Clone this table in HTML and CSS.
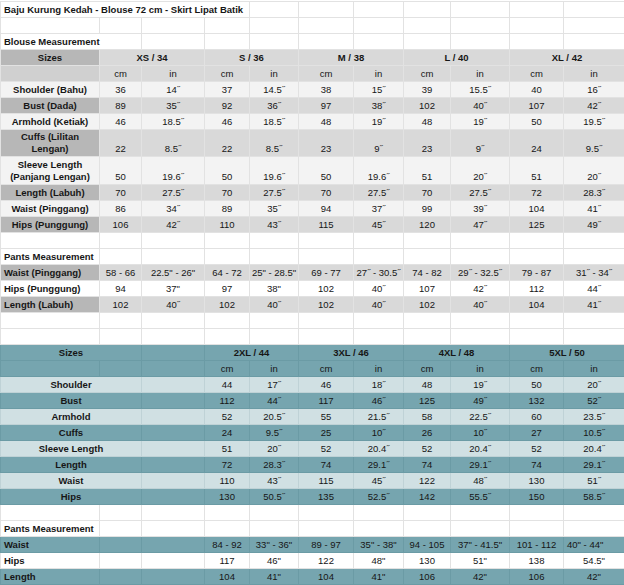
FILE: index.html
```html
<!DOCTYPE html>
<html lang="ms">
<head>
<meta charset="utf-8">
<title>Baju Kurung Kedah - Size Chart</title>
<link rel="stylesheet" href="styles.css">
</head>
<body>
<table class="sheet">
  <colgroup>
    <col class="c-a"><col class="c-b"><col class="c-c"><col class="c-d"><col class="c-e"><col class="c-f"><col class="c-g"><col class="c-h"><col class="c-i"><col class="c-j"><col class="c-k">
  </colgroup>
  <tbody>
    <tr><td class="left b" colspan="4">Baju Kurung Kedah - Blouse 72 cm - Skirt Lipat Batik</td><td></td><td></td><td></td><td></td><td></td><td></td><td></td></tr>
    <tr><td></td><td></td><td></td><td></td><td></td><td></td><td></td><td></td><td></td><td></td><td></td></tr>
    <tr><td class="left b" colspan="2">Blouse Measurement</td><td></td><td></td><td></td><td></td><td></td><td></td><td></td><td></td><td></td></tr>

    <tr class="g2 b"><td class="g3">Sizes</td><td colspan="2">XS / 34</td><td colspan="2">S / 36</td><td colspan="2">M / 38</td><td colspan="2">L / 40</td><td colspan="2">XL / 42</td></tr>
    <tr class="g2"><td class="g5"></td><td>cm</td><td>in</td><td>cm</td><td>in</td><td>cm</td><td>in</td><td>cm</td><td>in</td><td>cm</td><td>in</td></tr>
    <tr class="g1"><td class="b">Shoulder (Bahu)</td><td>36</td><td>14˝</td><td>37</td><td>14.5˝</td><td>38</td><td>15˝</td><td>39</td><td>15.5˝</td><td>40</td><td>16˝</td></tr>
    <tr class="g2"><td class="g3 b">Bust (Dada)</td><td>89</td><td>35˝</td><td>92</td><td>36˝</td><td>97</td><td>38˝</td><td>102</td><td>40˝</td><td>107</td><td>42˝</td></tr>
    <tr class="g1"><td class="b">Armhold (Ketiak)</td><td>46</td><td>18.5˝</td><td>46</td><td>18.5˝</td><td>48</td><td>19˝</td><td>48</td><td>19˝</td><td>50</td><td>19.5˝</td></tr>
    <tr class="g2 tall"><td class="g3 b">Cuffs (Lilitan<br>Lengan)</td><td>22</td><td>8.5˝</td><td>22</td><td>8.5˝</td><td>23</td><td>9˝</td><td>23</td><td>9˝</td><td>24</td><td>9.5˝</td></tr>
    <tr class="g1 tall2"><td class="b">Sleeve Length<br>(Panjang Lengan)</td><td>50</td><td>19.6˝</td><td>50</td><td>19.6˝</td><td>50</td><td>19.6˝</td><td>51</td><td>20˝</td><td>51</td><td>20˝</td></tr>
    <tr class="g2"><td class="g3 b">Length (Labuh)</td><td>70</td><td>27.5˝</td><td>70</td><td>27.5˝</td><td>70</td><td>27.5˝</td><td>70</td><td>27.5˝</td><td>72</td><td>28.3˝</td></tr>
    <tr class="g1"><td class="b">Waist (Pinggang)</td><td>86</td><td>34˝</td><td>89</td><td>35˝</td><td>94</td><td>37˝</td><td>99</td><td>39˝</td><td>104</td><td>41˝</td></tr>
    <tr class="g2"><td class="g3 b">Hips (Punggung)</td><td>106</td><td>42˝</td><td>110</td><td>43˝</td><td>115</td><td>45˝</td><td>120</td><td>47˝</td><td>125</td><td>49˝</td></tr>

    <tr><td></td><td></td><td></td><td></td><td></td><td></td><td></td><td></td><td></td><td></td><td></td></tr>
    <tr><td class="left b">Pants Measurement</td><td></td><td></td><td></td><td></td><td></td><td></td><td></td><td></td><td></td><td></td></tr>
    <tr class="g2"><td class="g3 left b">Waist (Pinggang)</td><td>58 - 66</td><td>22.5" - 26"</td><td>64 - 72</td><td>25" - 28.5"</td><td>69 - 77</td><td>27˝ - 30.5˝</td><td>74 - 82</td><td>29˝ - 32.5˝</td><td>79 - 87</td><td>31˝ - 34˝</td></tr>
    <tr><td class="left b">Hips (Punggung)</td><td>94</td><td>37"</td><td>97</td><td>38"</td><td>102</td><td>40˝</td><td>107</td><td>42˝</td><td>112</td><td>44˝</td></tr>
    <tr class="g2"><td class="g3 left b">Length (Labuh)</td><td>102</td><td>40˝</td><td>102</td><td>40˝</td><td>102</td><td>40˝</td><td>102</td><td>40˝</td><td>104</td><td>41˝</td></tr>

    <tr><td></td><td></td><td></td><td></td><td></td><td></td><td></td><td></td><td></td><td></td><td></td></tr>
    <tr><td></td><td></td><td></td><td></td><td></td><td></td><td></td><td></td><td></td><td></td><td></td></tr>

    <tr class="t1 b"><td colspan="2">Sizes</td><td></td><td colspan="2">2XL / 44</td><td colspan="2">3XL / 46</td><td colspan="2">4XL / 48</td><td colspan="2">5XL / 50</td></tr>
    <tr class="t1"><td></td><td></td><td></td><td>cm</td><td>in</td><td>cm</td><td>in</td><td>cm</td><td>in</td><td>cm</td><td>in</td></tr>
    <tr class="t2"><td class="b" colspan="2">Shoulder</td><td></td><td>44</td><td>17˝</td><td>46</td><td>18˝</td><td>48</td><td>19˝</td><td>50</td><td>20˝</td></tr>
    <tr class="t1"><td class="b" colspan="2">Bust</td><td></td><td>112</td><td>44˝</td><td>117</td><td>46˝</td><td>125</td><td>49˝</td><td>132</td><td>52˝</td></tr>
    <tr class="t2"><td class="b" colspan="2">Armhold</td><td></td><td>52</td><td>20.5˝</td><td>55</td><td>21.5˝</td><td>58</td><td>22.5˝</td><td>60</td><td>23.5˝</td></tr>
    <tr class="t1"><td class="b" colspan="2">Cuffs</td><td></td><td>24</td><td>9.5˝</td><td>25</td><td>10˝</td><td>26</td><td>10˝</td><td>27</td><td>10.5˝</td></tr>
    <tr class="t2"><td class="b" colspan="2">Sleeve Length</td><td></td><td>51</td><td>20˝</td><td>52</td><td>20.4˝</td><td>52</td><td>20.4˝</td><td>52</td><td>20.4˝</td></tr>
    <tr class="t1"><td class="b" colspan="2">Length</td><td></td><td>72</td><td>28.3˝</td><td>74</td><td>29.1˝</td><td>74</td><td>29.1˝</td><td>74</td><td>29.1˝</td></tr>
    <tr class="t2"><td class="b" colspan="2">Waist</td><td></td><td>110</td><td>43˝</td><td>115</td><td>45˝</td><td>122</td><td>48˝</td><td>130</td><td>51˝</td></tr>
    <tr class="t1"><td class="b" colspan="2">Hips</td><td></td><td>130</td><td>50.5˝</td><td>135</td><td>52.5˝</td><td>142</td><td>55.5˝</td><td>150</td><td>58.5˝</td></tr>

    <tr><td></td><td></td><td></td><td></td><td></td><td></td><td></td><td></td><td></td><td></td><td></td></tr>
    <tr><td class="left b">Pants Measurement</td><td></td><td></td><td></td><td></td><td></td><td></td><td></td><td></td><td></td><td></td></tr>
    <tr class="t1"><td class="left b">Waist</td><td></td><td></td><td>84 - 92</td><td>33" - 36"</td><td>89 - 97</td><td>35" - 38"</td><td>94 - 105</td><td>37" - 41.5"</td><td>101 - 112</td><td class="left">40" - 44"</td></tr>
    <tr><td class="left b">Hips</td><td></td><td></td><td>117</td><td>46"</td><td>122</td><td>48"</td><td>130</td><td>51"</td><td>138</td><td>54.5"</td></tr>
    <tr class="t1"><td class="left b">Length</td><td></td><td></td><td>104</td><td>41"</td><td>104</td><td>41"</td><td>106</td><td>42"</td><td>106</td><td>42"</td></tr>
  </tbody>
</table>
</body>
</html>
```

FILE: styles.css
```css
html, body {
  margin: 0;
  padding: 0;
  background: #ffffff;
}

body {
  font-family: "Liberation Sans", Arial, sans-serif;
  font-size: 9.5px;
  color: #161616;
  overflow: hidden;
}

.sheet {
  border-collapse: collapse;
  table-layout: fixed;
  width: 624px;
  margin-top: 1px;
}

.c-a { width: 99px; }
.c-b { width: 42px; }
.c-c { width: 63px; }
.c-d { width: 45px; }
.c-e { width: 49px; }
.c-f { width: 55px; }
.c-g { width: 50px; }
.c-h { width: 47px; }
.c-i { width: 59px; }
.c-j { width: 54px; }
.c-k { width: 61px; }

.sheet tr {
  height: 16px;
}

.sheet tr.tall { height: 27px; }
.sheet tr.tall2 { height: 28px; }

.sheet td {
  border: 1px solid #e2e2e2;
  padding: 0 1px 1px;
  line-height: 12px;
  vertical-align: bottom;
  text-align: center;
  white-space: nowrap;
  overflow: visible;
}

.sheet td.left {
  text-align: left;
  padding-left: 3px;
}

.b { font-weight: bold; }

/* grey palette (top table) */
.g1 td { background: #f3f3f3; }
.g2 td { background: #d9d9d9; }
.sheet td.g3 { background: #b7b7b7; }
.sheet td.g5 { background: #d0d0d0; }

/* teal palette (bottom table) */
.t1 td {
  background: #76a5af;
  border-color: #6b9ba5;
}
.t2 td {
  background: #d0e0e3;
  border-color: #bfd2d6;
}
```
